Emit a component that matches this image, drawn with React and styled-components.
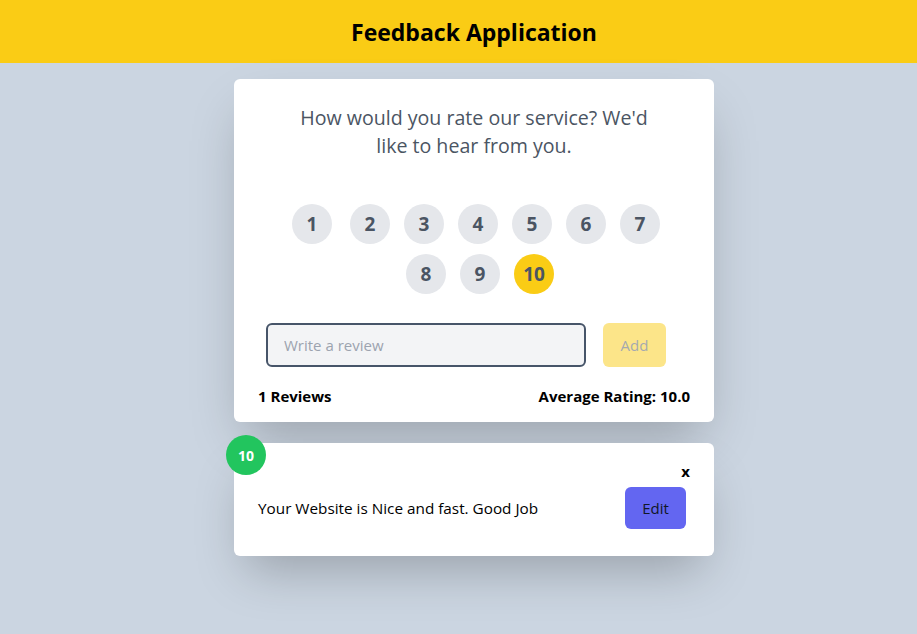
import React, { useState } from "react";
import styled, { createGlobalStyle } from "styled-components";

const GlobalStyle = createGlobalStyle`
  * { box-sizing: border-box; }
  body {
    margin: 0;
    background: #cbd5e1;
    font-family: "Open Sans", "Noto Sans", sans-serif;
    min-height: 100vh;
  }
`;

const Header = styled.header`
  background: #facc15;
  height: 63px;
  padding-left: 31px;
  display: flex;
  align-items: center;
  justify-content: center;
`;

const Title = styled.h1`
  margin: 0;
  font-size: 23px;
  font-weight: 700;
  color: #000;
`;

const Page = styled.div`
  padding-left: 31px;
`;

const Main = styled.main`
  width: 480px;
  margin: 16px auto 0;
  display: flex;
  flex-direction: column;
  gap: 21px;
`;

const Card = styled.div`
  position: relative;
  background: #fff;
  border-radius: 6px;
  box-shadow: 0 25px 50px -12px rgba(0, 0, 0, 0.25);
  padding: ${(p) => p.$pad || "24px"};
`;

const Question = styled.h2`
  margin: 0 auto;
  max-width: 370px;
  font-size: 19.6px;
  line-height: 28px;
  font-weight: 500;
  color: #4b5563;
  text-align: center;
`;

const Ratings = styled.ul`
  list-style: none;
  margin: 39px 0 0 22px;
  padding: 0;
  width: 400px;
  display: flex;
  flex-wrap: wrap;
  justify-content: center;
`;

const Rate = styled.li`
  width: 40px;
  height: 40px;
  margin: 5px 7px;
  border-radius: 50%;
  display: flex;
  align-items: center;
  justify-content: center;
  font-size: 19px;
  font-weight: 700;
  color: #4b5563;
  background: ${(p) => (p.$active ? "#facc15" : "#e5e7eb")};
  cursor: pointer;
  &:first-child {
    margin: 5px 11px 5px -1px;
  }
`;

const Form = styled.form`
  display: flex;
  align-items: center;
  gap: 17px;
  margin: 24px 0 0 8px;
`;

const Input = styled.input`
  width: 320px;
  height: 44px;
  border: 2px solid #475569;
  border-radius: 6px;
  background: #f3f4f6;
  padding: 0 16px;
  font-family: inherit;
  font-size: 15px;
  color: #111827;
  outline: none;
  &::placeholder {
    color: #9ca3af;
  }
`;

const AddButton = styled.button`
  width: 63px;
  height: 44px;
  border: none;
  border-radius: 6px;
  background: #facc15;
  color: #4b5563;
  font-family: inherit;
  font-size: 15px;
  opacity: 0.5;
`;

const Stats = styled.div`
  display: flex;
  justify-content: space-between;
  margin-top: 19px;
  font-size: 15px;
  font-weight: 700;
  color: #000;
`;

const Badge = styled.div`
  position: absolute;
  top: -8px;
  left: -8px;
  width: 40px;
  height: 40px;
  border-radius: 50%;
  background: #22c55e;
  color: #fff;
  font-size: 14px;
  font-weight: 700;
  display: flex;
  align-items: center;
  justify-content: center;
`;

const Close = styled.button`
  position: absolute;
  top: 18px;
  right: 24px;
  border: none;
  background: none;
  padding: 0;
  font-family: inherit;
  font-size: 15px;
  font-weight: 700;
  color: #000;
  cursor: pointer;
`;

const ReviewRow = styled.div`
  display: flex;
  align-items: center;
  justify-content: space-between;
  margin-top: 44px;
`;

const ReviewText = styled.p`
  margin: 0;
  font-size: 15.3px;
  color: #000;
`;

const EditButton = styled.button`
  width: 61px;
  height: 42px;
  border: none;
  border-radius: 6px;
  background: #6366f1;
  color: #111827;
  font-family: inherit;
  font-size: 15px;
  margin-right: 4px;
  cursor: pointer;
`;

export default function App() {
  const [rating, setRating] = useState(10);
  const nums = [1, 2, 3, 4, 5, 6, 7, 8, 9, 10];

  return (
    <>
      <GlobalStyle />
      <Header>
        <Title>Feedback Application</Title>
      </Header>
      <Page>
        <Main>
          <Card $pad="25px 24px 16px">
            <Question>How would you rate our service? We'd like to hear from you.</Question>
            <Ratings>
              {nums.map((n) => (
                <Rate key={n} $active={n === rating} onClick={() => setRating(n)}>
                  {n}
                </Rate>
              ))}
            </Ratings>
            <Form onSubmit={(e) => e.preventDefault()}>
              <Input placeholder="Write a review" />
              <AddButton type="submit" disabled>
                Add
              </AddButton>
            </Form>
            <Stats>
              <span>1 Reviews</span>
              <span>Average Rating: 10.0</span>
            </Stats>
          </Card>
          <Card $pad="0 24px 27px">
            <Badge>10</Badge>
            <Close>x</Close>
            <ReviewRow>
              <ReviewText>Your Website is Nice and fast. Good Job</ReviewText>
              <EditButton>Edit</EditButton>
            </ReviewRow>
          </Card>
        </Main>
      </Page>
    </>
  );
}
